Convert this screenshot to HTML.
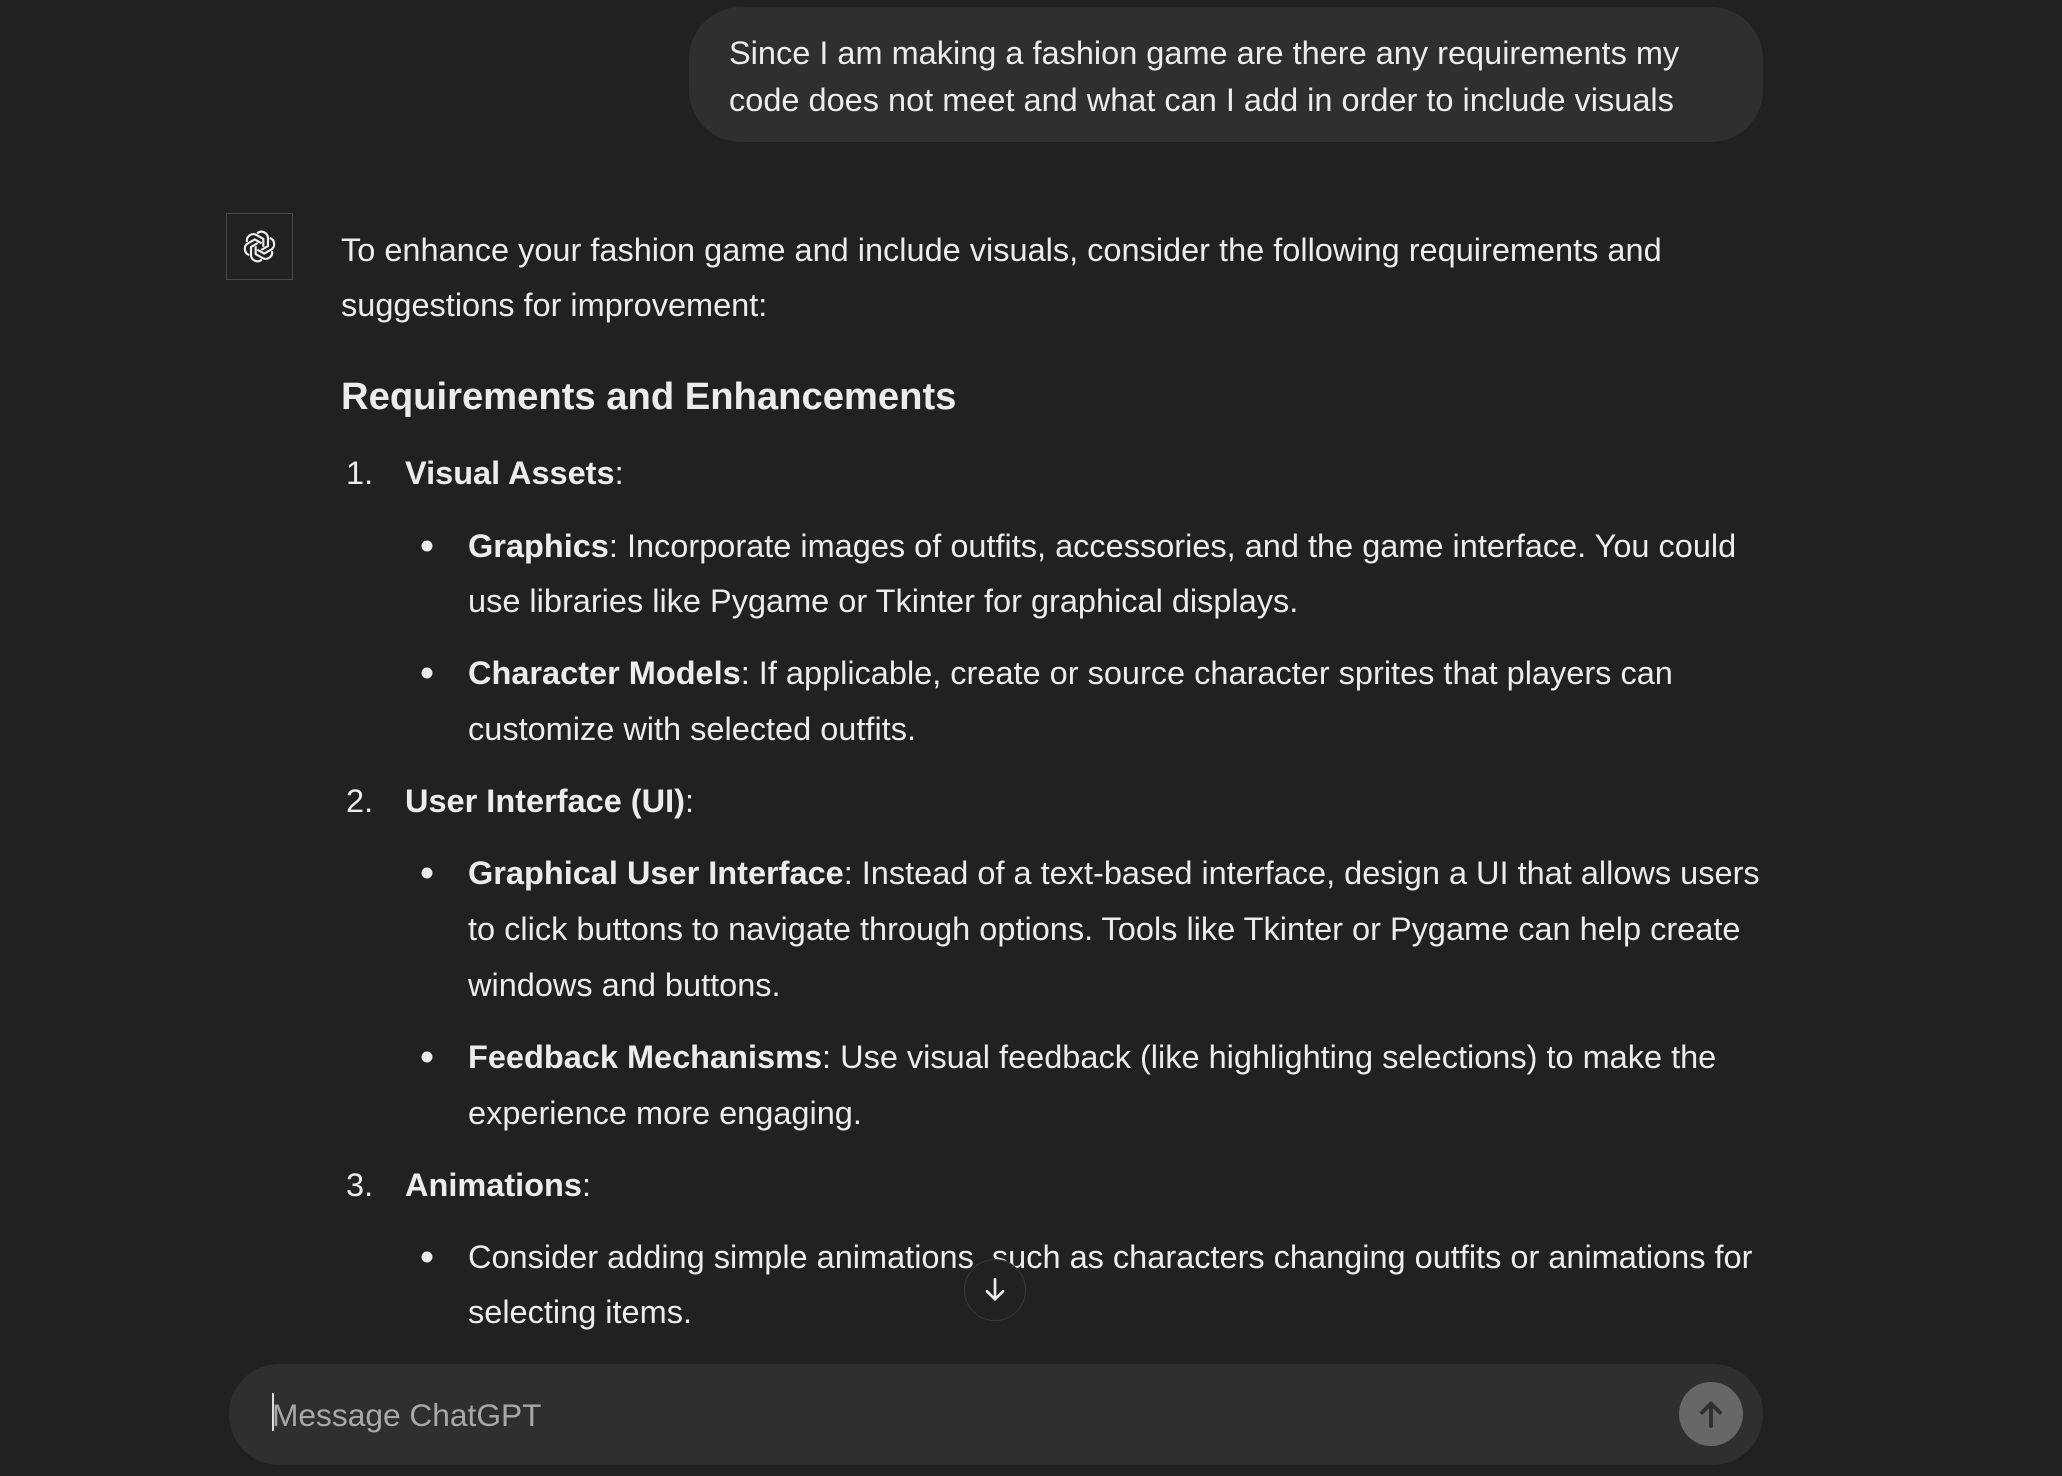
<!DOCTYPE html>
<html><head><meta charset="utf-8"><style>
html,body{margin:0;padding:0;background:#212121;width:2062px;height:1476px;overflow:hidden;font-family:"Liberation Sans",sans-serif;color:#ececec}
.t{position:absolute;white-space:nowrap;font-size:32.5px;line-height:40px;transform:translateY(-50%)}
b{font-weight:bold}
.bul{position:absolute;width:11px;height:11px;border-radius:50%;background:#ececec;transform:translate(-50%,-50%)}
</style></head><body>
<div style="position:absolute;left:689px;top:7px;width:1074px;height:135px;background:#2f2f2f;border-radius:52px"></div>
<div class="t" style="left:729px;top:53px">Since I am making a fashion game are there any requirements my</div>
<div class="t" style="left:729px;top:100px">code does not meet and what can I add in order to include visuals</div>

<div style="position:absolute;left:226px;top:213px;width:67px;height:67px;border:1px solid #4a4a4a;box-sizing:border-box"></div>
<svg style="position:absolute;left:241px;top:228px" width="37" height="37" viewBox="0 0 24 24" fill="none" stroke="#ececec" stroke-width="1.4" stroke-linejoin="round">
<g transform="translate(12 12)">
<path id="p" d="M-1.5 -8.5 a4.2 4.2 0 0 1 7 3.2 v5 l-4.4 2.5"/>
<use href="#p" transform="rotate(60)"/><use href="#p" transform="rotate(120)"/><use href="#p" transform="rotate(180)"/><use href="#p" transform="rotate(240)"/><use href="#p" transform="rotate(300)"/>
</g></svg>

<div class="t" style="left:341px;top:250px">To enhance your fashion game and include visuals, consider the following requirements and</div>
<div class="t" style="left:341px;top:305px">suggestions for improvement:</div>
<div class="t" style="left:341px;top:397px;font-size:38.2px;font-weight:bold">Requirements and Enhancements</div>

<div class="t" style="left:346px;top:473px">1.</div>
<div class="t" style="left:405px;top:473px"><b>Visual Assets</b>:</div>
<div class="bul" style="left:427px;top:546px"></div>
<div class="t" style="left:468px;top:546px"><b>Graphics</b>: Incorporate images of outfits, accessories, and the game interface. You could</div>
<div class="t" style="left:468px;top:601px">use libraries like Pygame or Tkinter for graphical displays.</div>
<div class="bul" style="left:427px;top:673px"></div>
<div class="t" style="left:468px;top:673px"><b>Character Models</b>: If applicable, create or source character sprites that players can</div>
<div class="t" style="left:468px;top:729px">customize with selected outfits.</div>

<div class="t" style="left:346px;top:801px">2.</div>
<div class="t" style="left:405px;top:801px"><b>User Interface (UI)</b>:</div>
<div class="bul" style="left:427px;top:873px"></div>
<div class="t" style="left:468px;top:873px"><b>Graphical User Interface</b>: Instead of a text-based interface, design a UI that allows users</div>
<div class="t" style="left:468px;top:929px">to click buttons to navigate through options. Tools like Tkinter or Pygame can help create</div>
<div class="t" style="left:468px;top:985px">windows and buttons.</div>
<div class="bul" style="left:427px;top:1057px"></div>
<div class="t" style="left:468px;top:1057px"><b>Feedback Mechanisms</b>: Use visual feedback (like highlighting selections) to make the</div>
<div class="t" style="left:468px;top:1113px">experience more engaging.</div>

<div class="t" style="left:346px;top:1185px">3.</div>
<div class="t" style="left:405px;top:1185px"><b>Animations</b>:</div>
<div class="bul" style="left:427px;top:1257px"></div>
<div class="t" style="left:468px;top:1257px">Consider adding simple animations, such as characters changing outfits or animations for</div>
<div class="t" style="left:468px;top:1312px">selecting items.</div>

<div style="position:absolute;left:964px;top:1259px;width:62px;height:62px;border-radius:50%;background:#212121;border:1px solid #3a3a3a;box-sizing:border-box"></div>
<svg style="position:absolute;left:979px;top:1274px" width="32" height="32" viewBox="0 0 24 24" fill="none" stroke="#ececec" stroke-width="2" stroke-linecap="round" stroke-linejoin="round"><path d="M12 4v15M6 13l6 6 6-6"/></svg>

<div style="position:absolute;left:229px;top:1364px;width:1534px;height:101px;background:#2f2f2f;border-radius:50px"></div>
<div style="position:absolute;left:272px;top:1393px;width:2px;height:38px;background:#ddd"></div>
<div class="t" style="left:272px;top:1415px;color:#a8a8a8;font-size:31.7px">Message ChatGPT</div>
<div style="position:absolute;left:1679px;top:1382px;width:64px;height:64px;border-radius:50%;background:#676767"></div>
<svg style="position:absolute;left:1693px;top:1396px" width="36" height="36" viewBox="0 0 24 24" fill="none" stroke="#2f2f2f" stroke-width="2.6" stroke-linecap="round" stroke-linejoin="round"><path d="M12 20V5M6 11l6-6 6 6"/></svg>
</body></html>
